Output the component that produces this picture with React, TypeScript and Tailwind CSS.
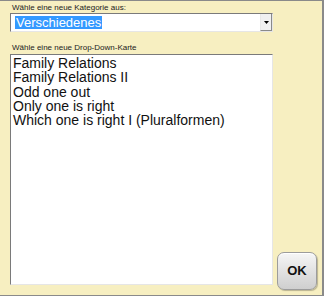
const items = [
  "Family Relations",
  "Family Relations II",
  "Odd one out",
  "Only one is right",
  "Which one is right I (Pluralformen)",
];

const App = () => {
  return (
    <div
      className="w-[324px] h-[296px] bg-[#f7efc1] border-t border-b border-r-2 border-[#8a8a8a] pl-[10px] pt-[2px] flex flex-col text-black"
      style={{ fontFamily: '"Liberation Sans", Arial, sans-serif' }}
    >
      <div className="text-[8px] leading-[10px] pl-[2px] text-[#222]">
        Wähle eine neue Kategorie aus:
      </div>

      <div className="w-[263px] h-[19px] bg-white border-t border-l border-[#7a7a7a] border-r border-b border-r-[#e6e6e6] border-b-[#e6e6e6] flex items-center">
        <div className="flex-1 pl-[4px] flex items-center">
          <span className="bg-[#3399ff] text-white text-[13px] leading-[13px] h-[13px] px-[1px]">
            Verschiedenes
          </span>
        </div>
        <div className="w-[12px] h-[17px] bg-[#f0f0f0] border-r border-b border-[#8a8a8a] border-l border-l-[#e8e8e8] flex items-center justify-center">
          <svg width="5" height="3" viewBox="0 0 5 3">
            <path d="M0 0H5L2.5 3Z" fill="#000" />
          </svg>
        </div>
      </div>

      <div className="mt-[11px] text-[8px] leading-[10px] pl-[2px] text-[#222]">
        Wähle eine neue Drop-Down-Karte
      </div>

      <div className="mt-[1px] flex items-start">
        <div className="w-[263px] h-[231px] bg-white border-t border-l border-[#7a7a7a] border-r border-b border-r-[#e6e6e6] border-b-[#e6e6e6] pl-[2px] pt-[1px]">
          {items.map((it) => (
            <div key={it} className="text-[14px] leading-[14.25px] text-[#111]">
              {it}
            </div>
          ))}
        </div>
        <button className="ml-[4px] mt-[198px] w-[40px] h-[38px] rounded-[7px] border border-[#9c9c9c] bg-gradient-to-b from-[#f6f6f6] via-[#e2e2e2] to-[#cfcfcf] shadow-[inset_0_1px_0_#fff,1px_1px_1px_rgba(0,0,0,0.25)] flex items-center justify-center text-[13px] font-bold text-[#111]">
          OK
        </button>
      </div>
    </div>
  );
};

export default App;
